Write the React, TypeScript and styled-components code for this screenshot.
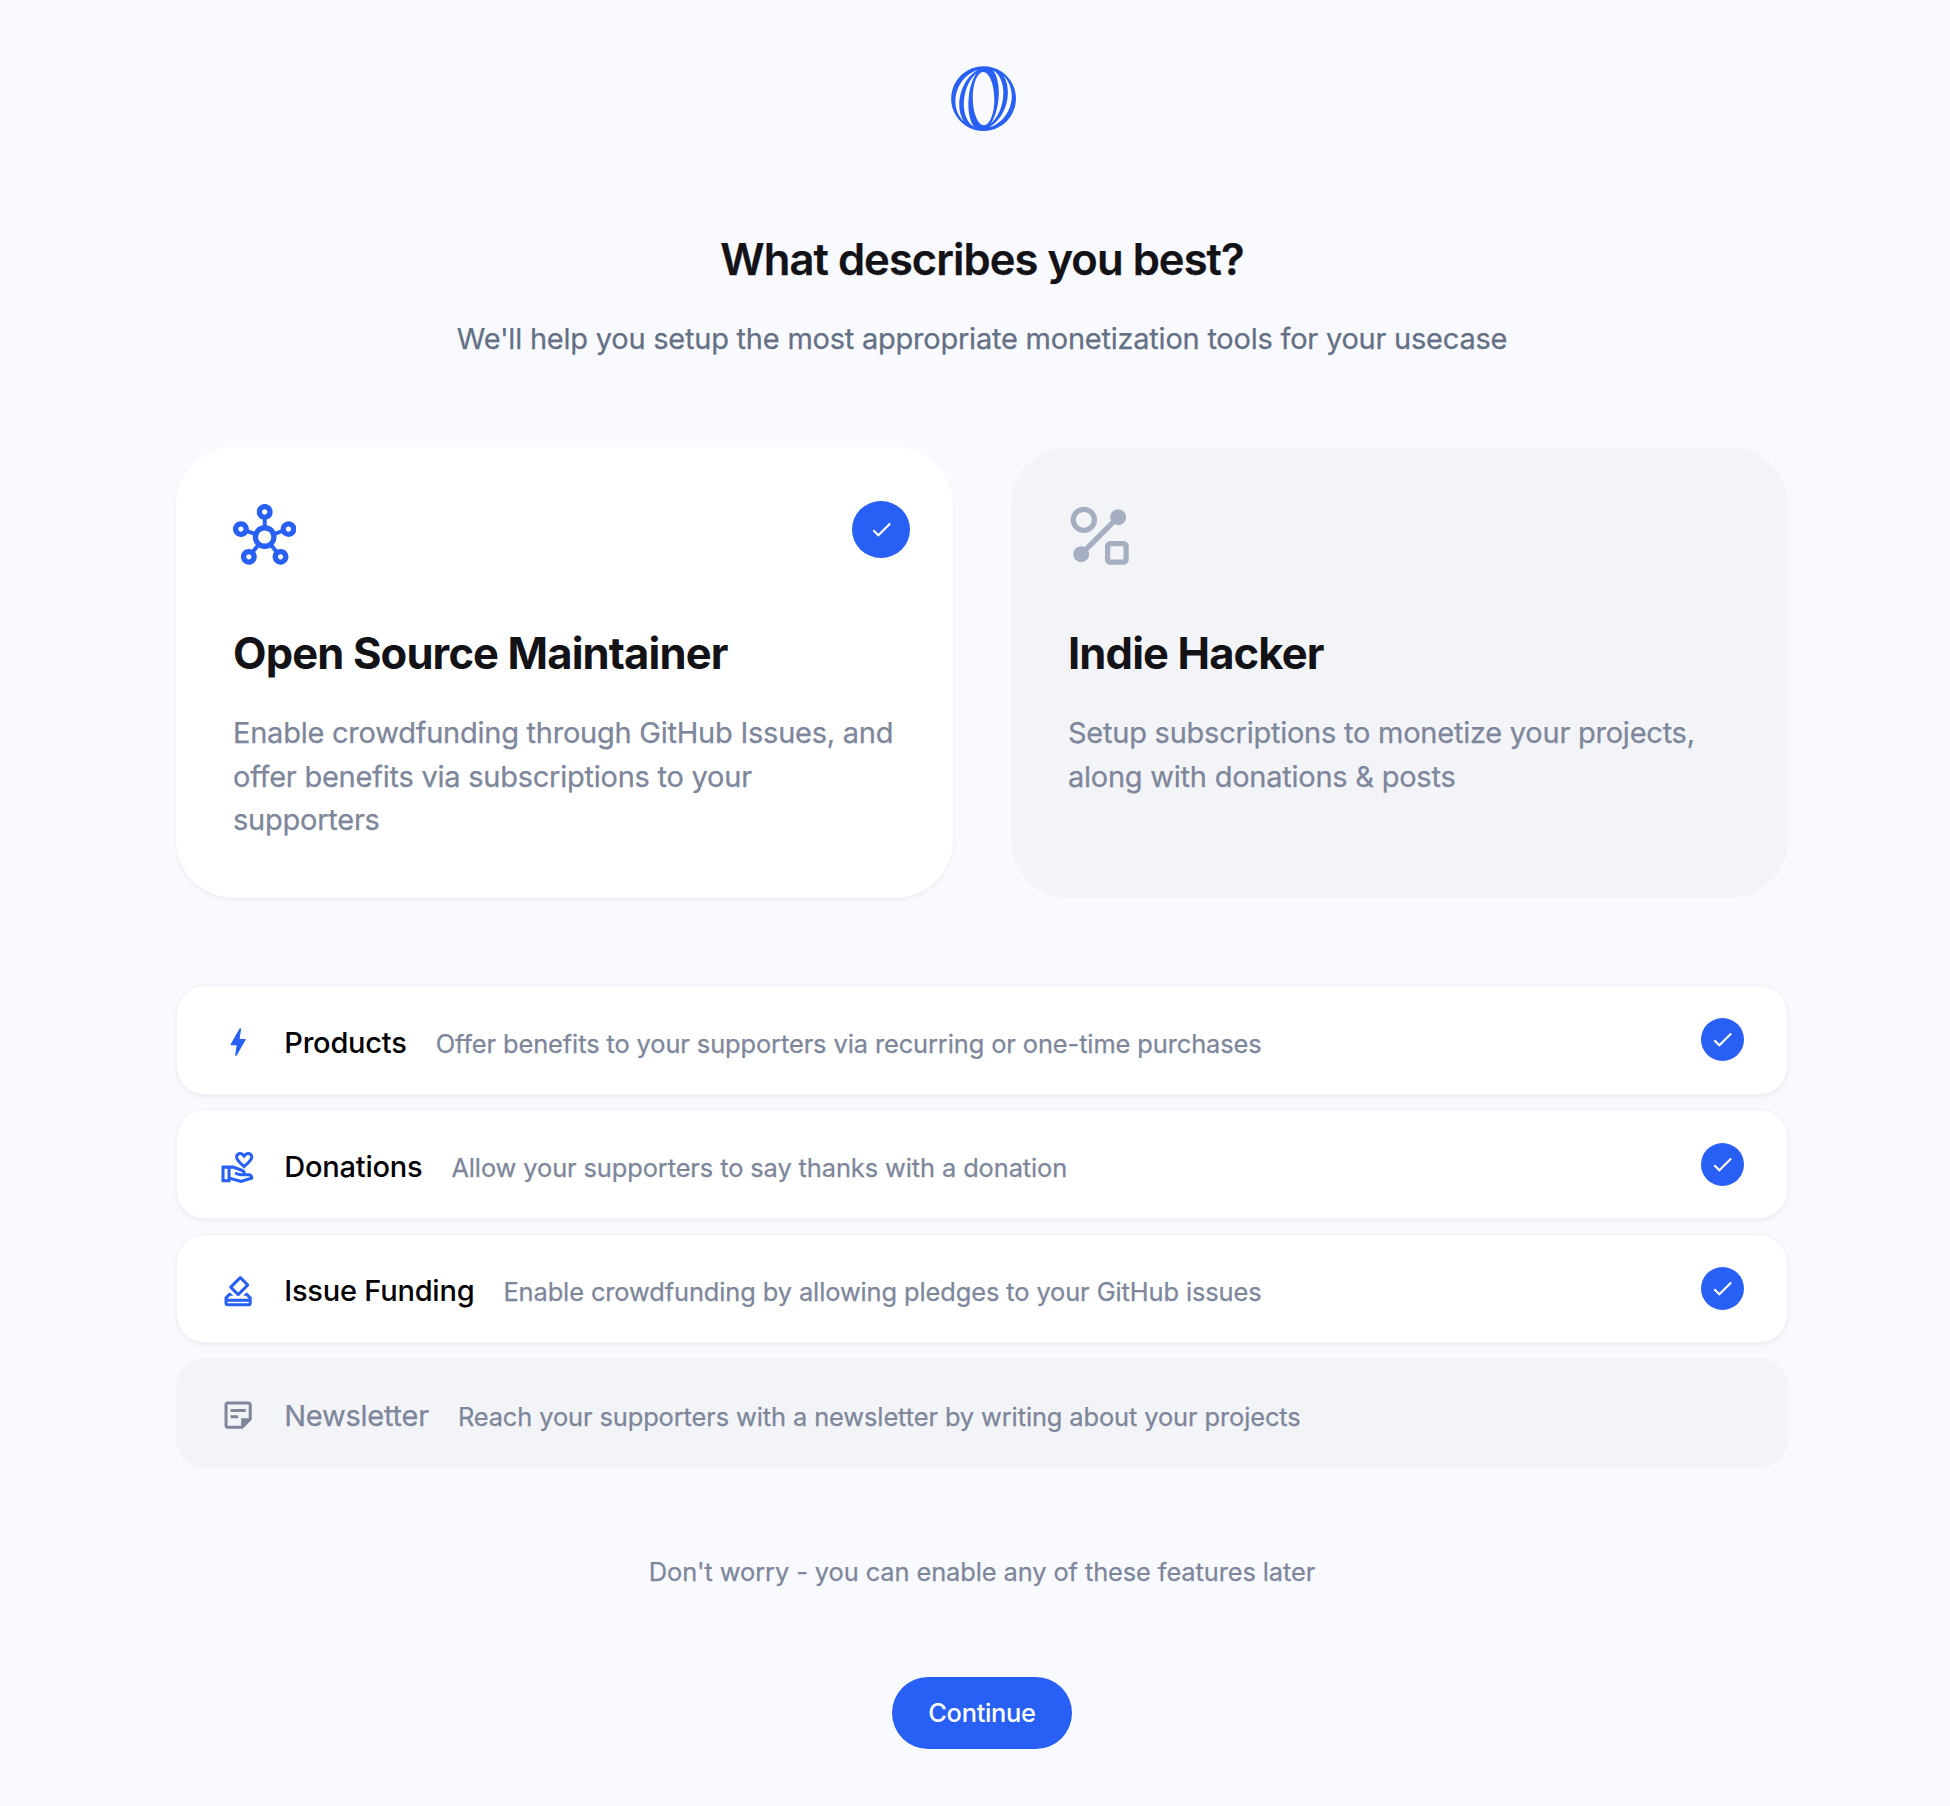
import React from 'react'
import styled, { createGlobalStyle } from 'styled-components'
import {
  MdBolt,
  MdCheck,
  MdOutlineHowToVote,
  MdOutlineHub,
  MdOutlineShapeLine,
  MdOutlineStickyNote2,
  MdOutlineVolunteerActivism,
} from 'react-icons/md'

const GlobalStyle = createGlobalStyle`
  *, *::before, *::after { box-sizing: border-box; }
  body {
    margin: 0;
    background: #f9faff;
    font-family: Inter, "Liberation Sans", sans-serif;
    -webkit-font-smoothing: antialiased;
  }
  h1, h2, h3, p { margin: 0; }
  p { -webkit-text-stroke: 0.25px currentColor; }
`

const blue = '#2860f6'
const muted = '#7d869a'
const inactive = '#f3f4f8'

const Page = styled.main`
  display: flex;
  flex-direction: column;
  align-items: center;
  min-height: 1806px;
  padding: 66px 162px 0 176px;
`

const Logo = styled.svg`
  display: block;
  width: 65px;
  height: 65px;
  margin-left: 3px;
  fill: ${blue};
`

const Header = styled.header`
  display: flex;
  flex-direction: column;
  align-items: center;
  gap: 31px;
  margin-top: 101px;
`

const Title = styled.h1`
  color: #121217;
  font-size: 43.5px;
  font-weight: 600;
  line-height: 54px;
  letter-spacing: -0.93px;
  -webkit-text-stroke: 0.25px currentColor;
`

const Subtitle = styled.p`
  color: #647084;
  font-size: 29px;
  line-height: 43.5px;
  letter-spacing: -0.23px;
`

const Cards = styled.section`
  display: grid;
  grid-template-columns: 1fr 1fr;
  gap: 58px;
  width: 100%;
  margin-top: 86.5px;
`

const Card = styled.article<{ $active?: boolean }>`
  display: flex;
  flex-direction: column;
  height: 451px;
  padding: 54px 43px 0 57px;
  border-radius: 58px;
  background: ${(p) => (p.$active ? '#fff' : inactive)};
  box-shadow: ${(p) => (p.$active ? '0 2px 4px rgba(20, 25, 50, 0.06)' : 'none')};
`

const CardTop = styled.div<{ $active?: boolean }>`
  display: flex;
  align-items: flex-start;
  justify-content: space-between;
  height: 125px;
  color: ${(p) => (p.$active ? blue : '#a5afc1')};
  > svg { display: block; width: 63.4px; height: 63.4px; margin-top: 2.6px; }
`

const CheckBadge = styled.span<{ $large?: boolean }>`
  display: flex;
  align-items: center;
  justify-content: center;
  flex: none;
  width: ${(p) => (p.$large ? 58 : 43)}px;
  height: ${(p) => (p.$large ? 57 : 43)}px;
  border-radius: 50%;
  background: ${blue};
  color: #fff;
  svg { display: block; width: 25px; height: 25px; }
`

const CardTitle = styled.h2`
  color: #121217;
  font-size: 43.5px;
  font-weight: 700;
  line-height: 54px;
  letter-spacing: -0.86px;
`

const CardText = styled.p`
  margin: 31px 12px 0 0;
  color: ${muted};
  font-size: 29px;
  line-height: 43.5px;
  letter-spacing: -0.24px;
`

const Features = styled.section`
  display: flex;
  flex-direction: column;
  gap: 14.7px;
  width: 100%;
  margin-top: 87px;
`

const Row = styled.div<{ $active?: boolean }>`
  display: flex;
  align-items: center;
  height: 109.7px;
  padding: 0 43px;
  border: 1px solid ${(p) => (p.$active ? '#f3f4f9' : inactive)};
  border-radius: 29px;
  background: ${(p) => (p.$active ? '#fff' : inactive)};
  box-shadow: ${(p) => (p.$active ? '0 2px 4px rgba(20, 25, 50, 0.06)' : 'none')};
`

const RowIcon = styled.span<{ $active?: boolean }>`
  display: flex;
  width: 36.25px;
  margin: 5px 28px 0 0;
  color: ${(p) => (p.$active ? blue : muted)};
  svg { display: block; width: 36.25px; height: 36.25px; }
`

const RowLabel = styled.div`
  display: flex;
  flex: 1;
  align-items: baseline;
  gap: 29px;
  padding-top: 5px;
`

const RowTitle = styled.h3<{ $active?: boolean }>`
  color: ${(p) => (p.$active ? '#000' : muted)};
  font-size: 29px;
  font-weight: ${(p) => (p.$active ? 500 : 400)};
  line-height: 43.5px;
  letter-spacing: ${(p) => (p.$active ? -0.22 : -0.24)}px;
  -webkit-text-stroke: ${(p) => (p.$active ? 0 : 0.25)}px currentColor;
`

const RowText = styled.p`
  color: ${muted};
  font-size: 25.4px;
  line-height: 36px;
  letter-spacing: -0.095px;
`

const Note = styled.p`
  margin-top: 86px;
  color: ${muted};
  font-size: 25.4px;
  line-height: 36px;
  letter-spacing: -0.09px;
`

const Continue = styled.button`
  width: 180px;
  height: 72px;
  margin-top: 87px;
  padding: 0;
  border: 0;
  border-radius: 36px;
  background: ${blue};
  color: #fff;
  font: 500 25.4px/36px Inter, "Liberation Sans", sans-serif;
  letter-spacing: -0.28px;
`

const features = [
  { title: 'Products', text: 'Offer benefits to your supporters via recurring or one-time purchases', Icon: MdBolt, active: true },
  { title: 'Donations', text: 'Allow your supporters to say thanks with a donation', Icon: MdOutlineVolunteerActivism, active: true },
  { title: 'Issue Funding', text: 'Enable crowdfunding by allowing pledges to your GitHub issues', Icon: MdOutlineHowToVote, active: true },
  { title: 'Newsletter', text: 'Reach your supporters with a newsletter by writing about your projects', Icon: MdOutlineStickyNote2, active: false },
]

export default function App() {
  return (
    <>
      <GlobalStyle />
      <Page>
        <Logo viewBox="0 0 300 300" aria-hidden="true">
          <path
            fillRule="evenodd"
            clipRule="evenodd"
            d="M66.4284 274.26C134.876 320.593 227.925 302.666 274.258 234.219C320.593 165.771 302.666 72.7222 234.218 26.3885C165.77 -19.9451 72.721 -2.0181 26.3873 66.4297C-19.9465 134.877 -2.01938 227.927 66.4284 274.26ZM47.9555 116.67C30.8375 169.263 36.5445 221.893 59.2454 256.373C18.0412 217.361 7.27564 150.307 36.9437 92.318C55.9152 55.2362 87.5665 29.3937 122.5 18.3483C90.5911 36.7105 62.5549 71.8144 47.9555 116.67ZM175.347 283.137C211.377 272.606 244.211 246.385 263.685 208.322C293.101 150.825 282.768 84.4172 242.427 45.2673C264.22 79.7626 269.473 131.542 252.631 183.287C237.615 229.421 208.385 265.239 175.347 283.137ZM183.627 266.229C207.945 245.418 228.016 210.604 236.936 168.79C251.033 102.693 232.551 41.1978 195.112 20.6768C214.97 47.3945 225.022 99.2902 218.824 157.333C214.085 201.724 200.814 240.593 183.627 266.229ZM63.7178 131.844C49.5155 198.43 68.377 260.345 106.374 280.405C85.9962 254.009 75.5969 201.514 81.8758 142.711C86.5375 99.0536 99.4504 60.737 116.225 35.0969C92.2678 55.983 72.5384 90.4892 63.7178 131.844ZM199.834 149.561C200.908 217.473 179.59 272.878 152.222 273.309C124.853 273.742 101.797 219.039 100.724 151.127C99.6511 83.2138 120.968 27.8094 148.337 27.3777C175.705 26.9446 198.762 81.648 199.834 149.561Z"
          />
        </Logo>
        <Header>
          <Title>What describes you best?</Title>
          <Subtitle>We'll help you setup the most appropriate monetization tools for your usecase</Subtitle>
        </Header>
        <Cards>
          <Card $active>
            <CardTop $active>
              <MdOutlineHub />
              <CheckBadge $large>
                <MdCheck />
              </CheckBadge>
            </CardTop>
            <CardTitle>Open Source Maintainer</CardTitle>
            <CardText>Enable crowdfunding through GitHub Issues, and offer benefits via subscriptions to your supporters</CardText>
          </Card>
          <Card>
            <CardTop>
              <MdOutlineShapeLine />
            </CardTop>
            <CardTitle>Indie Hacker</CardTitle>
            <CardText>Setup subscriptions to monetize your projects, along with donations &amp; posts</CardText>
          </Card>
        </Cards>
        <Features>
          {features.map(({ title, text, Icon, active }) => (
            <Row key={title} $active={active}>
              <RowIcon $active={active}>
                <Icon />
              </RowIcon>
              <RowLabel>
                <RowTitle $active={active}>{title}</RowTitle>
                <RowText>{text}</RowText>
              </RowLabel>
              {active && (
                <CheckBadge>
                  <MdCheck />
                </CheckBadge>
              )}
            </Row>
          ))}
        </Features>
        <Note>Don't worry - you can enable any of these features later</Note>
        <Continue>Continue</Continue>
      </Page>
    </>
  )
}
